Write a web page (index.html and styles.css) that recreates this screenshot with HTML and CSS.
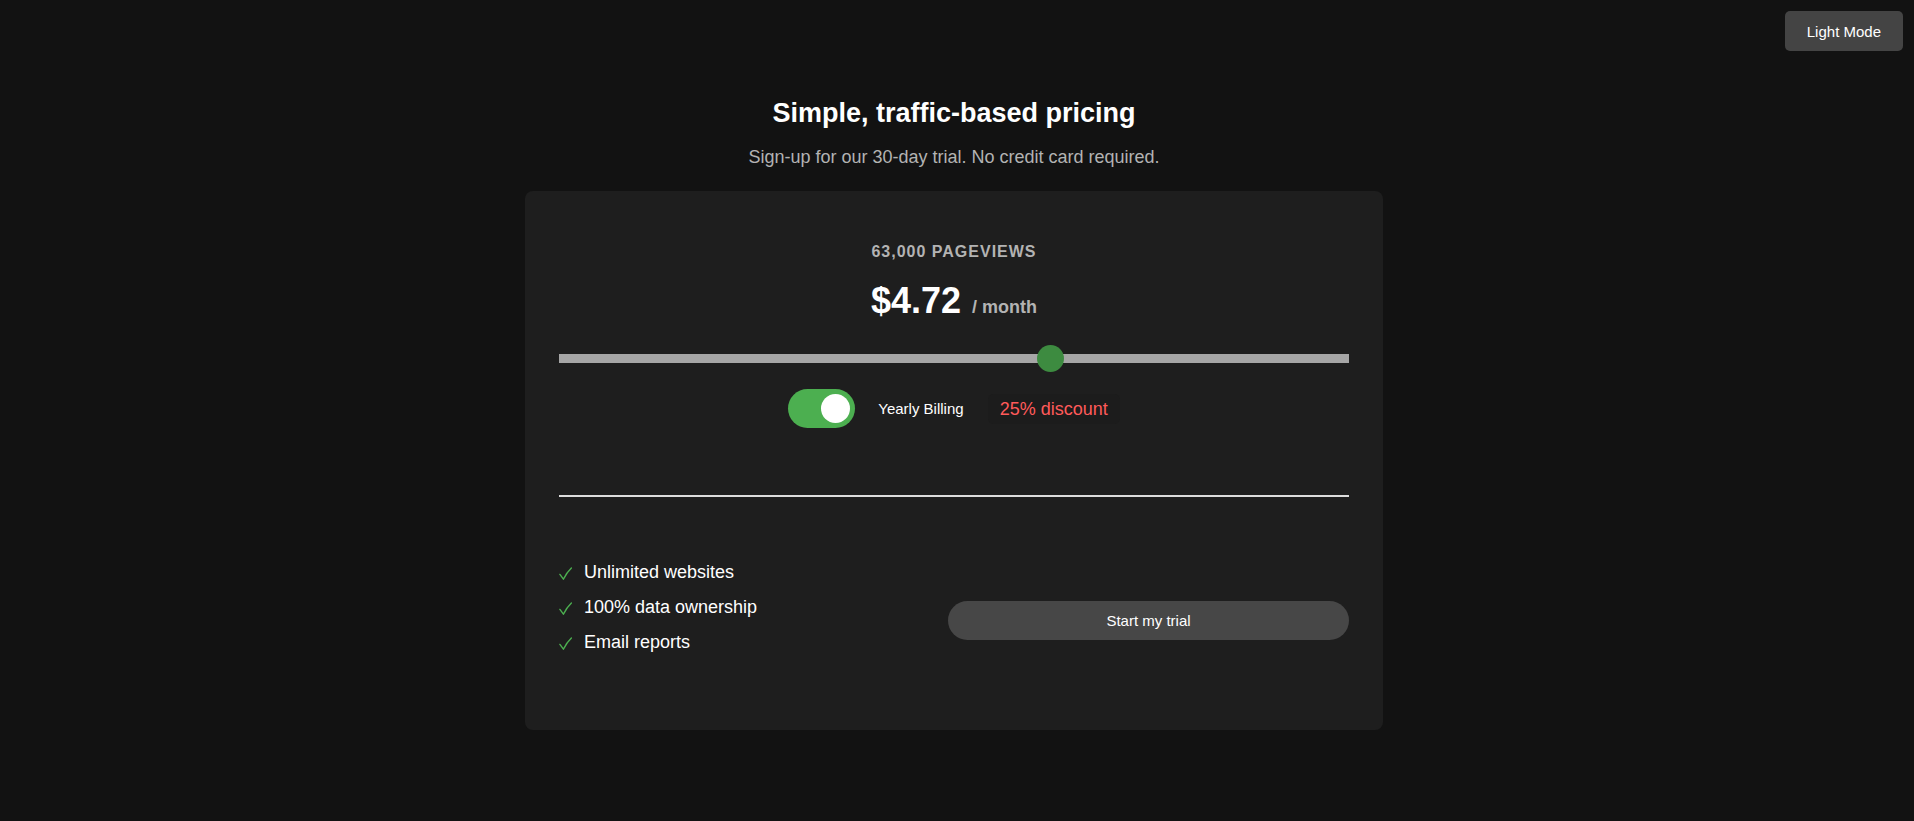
FILE: index.html
```html
<!DOCTYPE html>
<html lang="en">
<head>
<meta charset="utf-8">
<title>Pricing</title>
<link rel="stylesheet" href="styles.css">
</head>
<body>
<header class="topbar">
  <button class="theme-btn" type="button">Light Mode</button>
</header>
<main class="page">
  <h1 class="title">Simple, traffic-based pricing</h1>
  <p class="subtitle">Sign-up for our 30-day trial. No credit card required.</p>
  <section class="card">
    <div class="pageviews">63,000 PAGEVIEWS</div>
    <div class="price"><span class="amount">$4.72</span><span class="period">/ month</span></div>
    <input class="range" type="range" min="1000" max="100000" step="1000" value="63000" aria-label="Pageviews">
    <div class="billing">
      <span class="switch" role="switch" aria-checked="true"><span class="knob"></span></span>
      <span class="billing-label">Yearly Billing</span>
      <span class="discount">25% discount</span>
    </div>
    <hr class="divider">
    <div class="footer">
      <ul class="features">
        <li><svg class="check" viewBox="0 0 13 13" width="13" height="13" aria-hidden="true"><path d="M0.9 7.4 L4.4 12.2 Q7.6 5.4 12.4 0.9"/></svg><span>Unlimited websites</span></li>
        <li><svg class="check" viewBox="0 0 13 13" width="13" height="13" aria-hidden="true"><path d="M0.9 7.4 L4.4 12.2 Q7.6 5.4 12.4 0.9"/></svg><span>100% data ownership</span></li>
        <li><svg class="check" viewBox="0 0 13 13" width="13" height="13" aria-hidden="true"><path d="M0.9 7.4 L4.4 12.2 Q7.6 5.4 12.4 0.9"/></svg><span>Email reports</span></li>
      </ul>
      <button class="trial-btn" type="button">Start my trial</button>
    </div>
  </section>
</main>
</body>
</html>
```
FILE: styles.css
```css
* { box-sizing: border-box; }
html, body { margin: 0; padding: 0; }
body {
  background: #121212;
  color: #ffffff;
  font-family: "Liberation Sans", Arial, sans-serif;
  min-height: 821px;
}
.topbar {
  display: flex;
  justify-content: flex-end;
  padding: 11px 11px 0 0;
}
.theme-btn {
  height: 40px;
  padding: 0 22px;
  border: none;
  border-radius: 5px;
  background: #444444;
  color: #ffffff;
  font-family: inherit;
  font-size: 15px;
}
.page {
  display: flex;
  flex-direction: column;
  align-items: center;
  margin-right: 6px;
}
.title {
  margin: 47px 0 0;
  font-size: 27px;
  line-height: 31px;
  font-weight: 700;
}
.subtitle {
  margin: 18px 0 0;
  font-size: 18px;
  line-height: 21px;
  color: #b3b3b3;
}
.card {
  margin-top: 23px;
  width: 858px;
  background: #1e1e1e;
  border-radius: 8px;
  padding: 52px 34px 70px;
  display: flex;
  flex-direction: column;
}
.pageviews {
  text-align: center;
  font-size: 16px;
  line-height: 18px;
  font-weight: 700;
  letter-spacing: 1px;
  color: #b3b3b3;
}
.price {
  margin-top: 19px;
  height: 41px;
  display: flex;
  justify-content: center;
  align-items: baseline;
  gap: 11px;
}
.amount {
  font-size: 36px;
  line-height: 41px;
  font-weight: 700;
}
.period {
  font-size: 18px;
  line-height: 1;
  font-weight: 700;
  color: #b3b3b3;
}
.range {
  -webkit-appearance: none;
  appearance: none;
  display: block;
  width: 100%;
  height: 27px;
  margin: 24px 0 0;
  background: transparent;
}
.range::-webkit-slider-runnable-track {
  height: 9px;
  background: #a6a6a6;
  border: none;
}
.range::-webkit-slider-thumb {
  -webkit-appearance: none;
  appearance: none;
  width: 27px;
  height: 27px;
  margin-top: -9px;
  border: none;
  border-radius: 50%;
  background: #3d8b40;
}
.billing {
  margin-top: 17px;
  display: flex;
  justify-content: center;
  align-items: center;
  gap: 22px;
}
.switch {
  width: 67px;
  height: 39px;
  padding: 5px;
  border-radius: 20px;
  background: #4caf50;
  display: flex;
  justify-content: flex-end;
}
.knob {
  width: 29px;
  height: 29px;
  border-radius: 50%;
  background: #ffffff;
}
.billing-label {
  margin: 0 2px 0 1px;
  font-size: 15px;
  color: #ffffff;
}
.discount {
  height: 30px;
  line-height: 30px;
  padding: 0 12px;
  border-radius: 5px;
  background: #1c1c1c;
  color: #ff5a5a;
  font-size: 18px;
}
.divider {
  margin: 67px 0 0;
  height: 2px;
  border: none;
  background: #dddddd;
}
.footer {
  margin-top: 58px;
  display: flex;
  justify-content: space-between;
  align-items: center;
}
.features {
  list-style: none;
  margin: 0;
  padding: 0;
}
.features li {
  display: flex;
  align-items: center;
  gap: 12px;
  height: 35px;
  font-size: 18px;
  line-height: 21px;
  color: #ffffff;
}
.check {
  flex: none;
  margin-top: 2px;
  fill: none;
  stroke: #4caf50;
  stroke-width: 1.4;
  stroke-linecap: round;
  stroke-linejoin: round;
}
.trial-btn {
  margin-top: 25px;
  width: 401px;
  height: 39px;
  border: none;
  border-radius: 20px;
  background: #474747;
  color: #ffffff;
  font-family: inherit;
  font-size: 15px;
}
```
